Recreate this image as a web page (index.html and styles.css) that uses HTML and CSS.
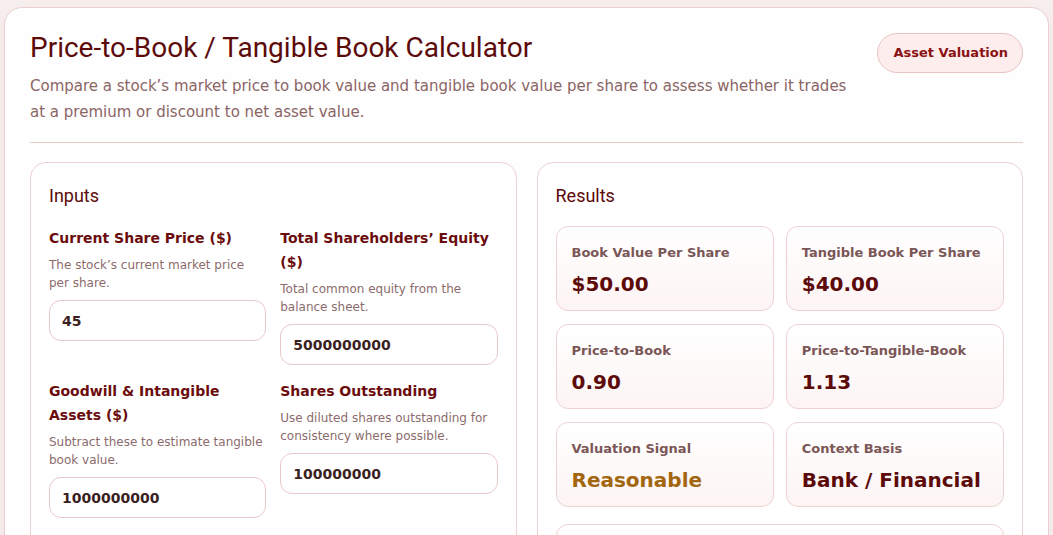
FILE: index.html
```html
<!DOCTYPE html>
<html lang="en">
<head>
<meta charset="utf-8">
<title>Price-to-Book / Tangible Book Calculator</title>
<link rel="stylesheet" href="styles.css">
</head>
<body>
<main class="card">
  <header class="header">
    <div class="intro">
      <h1 class="title">Price-to-Book / Tangible Book Calculator</h1>
      <p class="desc">Compare a stock’s market price to book value and tangible book value per share to assess whether it trades at a premium or discount to net asset value.</p>
    </div>
    <span class="badge">Asset Valuation</span>
  </header>
  <div class="panels">
    <section class="panel">
      <h2 class="panel-title">Inputs</h2>
      <div class="fields">
        <div class="field">
          <label class="label" for="price">Current Share Price ($)</label>
          <p class="help">The stock’s current market price per share.</p>
          <input class="input" id="price" type="text" value="45">
        </div>
        <div class="field">
          <label class="label" for="equity">Total Shareholders’ Equity ($)</label>
          <p class="help">Total common equity from the balance sheet.</p>
          <input class="input" id="equity" type="text" value="5000000000">
        </div>
        <div class="field">
          <label class="label" for="goodwill">Goodwill &amp; Intangible Assets ($)</label>
          <p class="help">Subtract these to estimate tangible book value.</p>
          <input class="input" id="goodwill" type="text" value="1000000000">
        </div>
        <div class="field">
          <label class="label" for="shares">Shares Outstanding</label>
          <p class="help">Use diluted shares outstanding for consistency where possible.</p>
          <input class="input" id="shares" type="text" value="100000000">
        </div>
      </div>
    </section>
    <section class="panel">
      <h2 class="panel-title">Results</h2>
      <div class="results">
        <div class="result">
          <div class="result-label">Book Value Per Share</div>
          <div class="result-value">$50.00</div>
        </div>
        <div class="result">
          <div class="result-label">Tangible Book Per Share</div>
          <div class="result-value">$40.00</div>
        </div>
        <div class="result">
          <div class="result-label">Price-to-Book</div>
          <div class="result-value">0.90</div>
        </div>
        <div class="result">
          <div class="result-label">Price-to-Tangible-Book</div>
          <div class="result-value">1.13</div>
        </div>
        <div class="result">
          <div class="result-label">Valuation Signal</div>
          <div class="result-value warn">Reasonable</div>
        </div>
        <div class="result">
          <div class="result-label">Context Basis</div>
          <div class="result-value">Bank / Financial</div>
        </div>
        <div class="result wide">
          <div class="result-label">Interpretation</div>
          <p class="note">The stock trades near its tangible book value, which is typical for banks and financial firms.</p>
        </div>
      </div>
    </section>
  </div>
</main>
</body>
</html>
```
FILE: styles.css
```css
* { box-sizing: border-box; }
html, body { margin: 0; }
body {
  padding: 7px 4px 20px 4px;
  background: #f7efee;
  font-family: "DejaVu Sans", Verdana, sans-serif;
  color: #3b1f1f;
}
.card {
  background: #fffefe;
  border: 1px solid #ead0d0;
  border-radius: 18px;
  padding: 23px 25px 24px;
  box-shadow: 0 4px 14px rgba(120, 40, 40, 0.05);
}
.header {
  display: flex;
  justify-content: space-between;
  align-items: flex-start;
  padding-bottom: 17px;
  border-bottom: 1px solid #ecc9c9;
  margin-bottom: 19px;
}
.intro { max-width: 830px; }
.title {
  margin: 0;
  font-family: Roboto, "Liberation Sans", sans-serif;
  font-weight: 400;
  font-size: 28px;
  line-height: 34px;
  color: #5c0a0a;
}
.desc {
  margin: 8px 0 0;
  font-size: 15px;
  line-height: 26px;
  color: #8a6565;
}
.badge {
  margin-top: 2px;
  flex-shrink: 0;
  padding: 0 14px 0 15px;
  height: 40px;
  line-height: 38px;
  border: 1px solid #e8c4c4;
  border-radius: 20px;
  background: #fdeded;
  color: #8b1212;
  font-weight: 700;
  font-size: 13px;
}
.panels {
  display: grid;
  grid-template-columns: 1fr 1fr;
  gap: 20px;
}
.panel {
  background: #fff;
  border: 1px solid #ecd2d2;
  border-radius: 16px;
  padding: 19px 18px 20px;
}
.panel-title {
  margin: 0 0 17px;
  font-family: Roboto, "Liberation Sans", sans-serif;
  font-weight: 400;
  font-size: 18px;
  line-height: 27px;
  color: #5c0a0a;
}
.fields {
  display: grid;
  grid-template-columns: 1fr 1fr;
  gap: 14px 14px;
  align-items: start;
}
.field { display: flex; flex-direction: column; }
.label {
  font-weight: 700;
  font-size: 14px;
  line-height: 24px;
  color: #6b0c0c;
}
.help {
  margin: 6px 0 0;
  font-size: 12px;
  line-height: 18px;
  color: #8b6b6b;
}
.input {
  margin-top: 8px;
  height: 41px;
  width: 100%;
  padding: 0 12px;
  border: 1px solid #e9c9c9;
  border-radius: 12px;
  background: #fff;
  font-family: "DejaVu Sans", Verdana, sans-serif;
  font-weight: 700;
  font-size: 14px;
  color: #3b1f1f;
  outline: none;
}
.results {
  display: grid;
  grid-template-columns: 1fr 1fr;
  gap: 13px 12px;
}
.result {
  border: 1px solid #eed2d2;
  border-radius: 12px;
  padding: 17px 15px 14px;
  background: linear-gradient(180deg, #ffffff 0%, #fdf4f4 100%);
}
.result.wide { grid-column: 1 / -1; margin-top: 4px; padding-top: 20px; }
.result-label {
  font-weight: 700;
  font-size: 13px;
  line-height: 18px;
  color: #7a5656;
}
.result-value {
  margin-top: 10px;
  font-weight: 700;
  font-size: 20px;
  line-height: 24px;
  color: #5c0a0a;
}
.result-value.warn { color: #a2660f; }
.note {
  margin: 8px 0 0;
  font-size: 13px;
  line-height: 20px;
  color: #7a5656;
}
```
